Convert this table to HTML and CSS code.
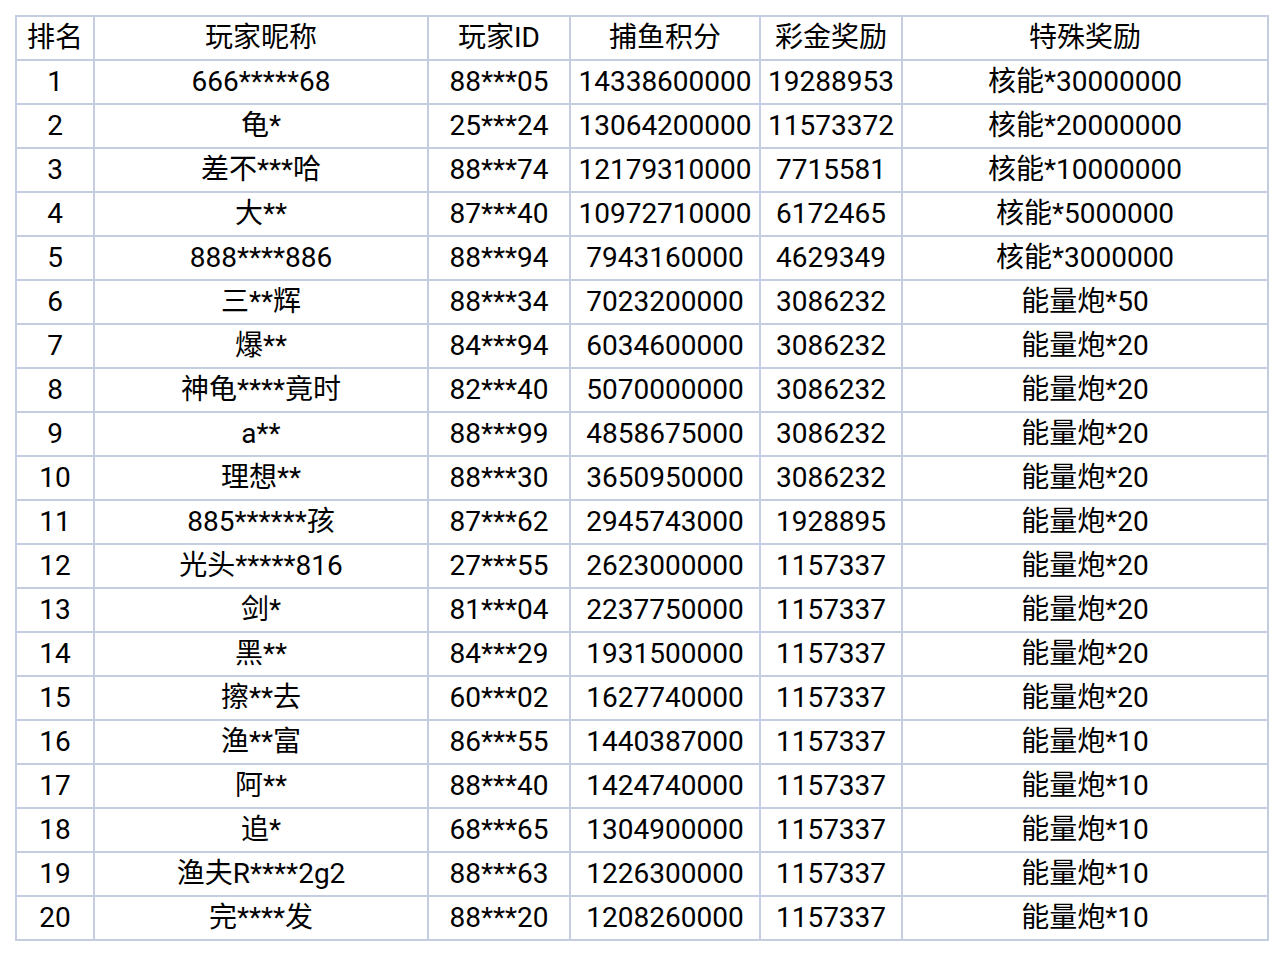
FILE: index.html
```html
<!DOCTYPE html>
<html lang="zh-CN">
<head>
<meta charset="utf-8">
<title>排行榜</title>
<link rel="stylesheet" href="styles.css">
</head>
<body>
<table class="rank">
  <colgroup>
    <col class="c-rank"><col class="c-name"><col class="c-id"><col class="c-score"><col class="c-bonus"><col class="c-special">
  </colgroup>
  <thead>
    <tr><th>排名</th><th>玩家昵称</th><th>玩家ID</th><th>捕鱼积分</th><th>彩金奖励</th><th>特殊奖励</th></tr>
  </thead>
  <tbody>
    <tr><td>1</td><td>666*****68</td><td>88***05</td><td>14338600000</td><td>19288953</td><td>核能*30000000</td></tr>
    <tr><td>2</td><td>龟*</td><td>25***24</td><td>13064200000</td><td>11573372</td><td>核能*20000000</td></tr>
    <tr><td>3</td><td>差不***哈</td><td>88***74</td><td>12179310000</td><td>7715581</td><td>核能*10000000</td></tr>
    <tr><td>4</td><td>大**</td><td>87***40</td><td>10972710000</td><td>6172465</td><td>核能*5000000</td></tr>
    <tr><td>5</td><td>888****886</td><td>88***94</td><td>7943160000</td><td>4629349</td><td>核能*3000000</td></tr>
    <tr><td>6</td><td>三**辉</td><td>88***34</td><td>7023200000</td><td>3086232</td><td>能量炮*50</td></tr>
    <tr><td>7</td><td>爆**</td><td>84***94</td><td>6034600000</td><td>3086232</td><td>能量炮*20</td></tr>
    <tr><td>8</td><td>神龟****竟时</td><td>82***40</td><td>5070000000</td><td>3086232</td><td>能量炮*20</td></tr>
    <tr><td>9</td><td>a**</td><td>88***99</td><td>4858675000</td><td>3086232</td><td>能量炮*20</td></tr>
    <tr><td>10</td><td>理想**</td><td>88***30</td><td>3650950000</td><td>3086232</td><td>能量炮*20</td></tr>
    <tr><td>11</td><td>885******孩</td><td>87***62</td><td>2945743000</td><td>1928895</td><td>能量炮*20</td></tr>
    <tr><td>12</td><td>光头*****816</td><td>27***55</td><td>2623000000</td><td>1157337</td><td>能量炮*20</td></tr>
    <tr><td>13</td><td>剑*</td><td>81***04</td><td>2237750000</td><td>1157337</td><td>能量炮*20</td></tr>
    <tr><td>14</td><td>黑**</td><td>84***29</td><td>1931500000</td><td>1157337</td><td>能量炮*20</td></tr>
    <tr><td>15</td><td>擦**去</td><td>60***02</td><td>1627740000</td><td>1157337</td><td>能量炮*20</td></tr>
    <tr><td>16</td><td>渔**富</td><td>86***55</td><td>1440387000</td><td>1157337</td><td>能量炮*10</td></tr>
    <tr><td>17</td><td>阿**</td><td>88***40</td><td>1424740000</td><td>1157337</td><td>能量炮*10</td></tr>
    <tr><td>18</td><td>追*</td><td>68***65</td><td>1304900000</td><td>1157337</td><td>能量炮*10</td></tr>
    <tr><td>19</td><td>渔夫R****2g2</td><td>88***63</td><td>1226300000</td><td>1157337</td><td>能量炮*10</td></tr>
    <tr><td>20</td><td>完****发</td><td>88***20</td><td>1208260000</td><td>1157337</td><td>能量炮*10</td></tr>
  </tbody>
</table>
</body>
</html>
```

FILE: styles.css
```css
html, body {
  margin: 0;
  padding: 0;
  background: #ffffff;
}

body {
  padding: 15px;
  font-family: Roboto, "Noto Sans CJK SC", sans-serif;
  color: #000000;
}

.rank {
  border-collapse: collapse;
  table-layout: fixed;
  width: 1254px;
  font-size: 28px;
}

.c-rank { width: 78px; }
.c-name { width: 334px; }
.c-id { width: 142px; }
.c-score { width: 190px; }
.c-bonus { width: 142px; }
.c-special { width: 366px; }

.rank th,
.rank td {
  border: 2px solid #c5cde0;
  height: 40px;
  padding: 1px 0 1px;
  text-align: center;
  vertical-align: middle;
  font-weight: normal;
  line-height: 30px;
  white-space: nowrap;
}
```
